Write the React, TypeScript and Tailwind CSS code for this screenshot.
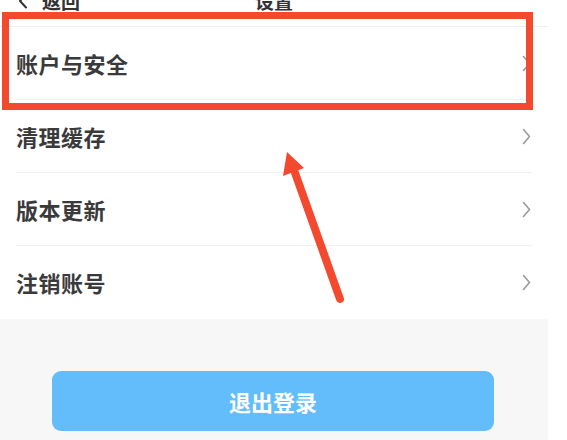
import React from "react";

const rows = ["账户与安全", "清理缓存", "版本更新", "注销账号"];

const cjk = { fontFamily: '"Noto Sans CJK SC", "Noto Sans", sans-serif' };

function Chevron({ className = "" }: { className?: string }) {
  return (
    <svg width="9" height="17" viewBox="0 0 9 17" fill="none" className={className}>
      <path d="M1.5 1.5 L7.5 8.5 L1.5 15.5" stroke="#9a9a9a" strokeWidth="1.6" strokeLinecap="round" strokeLinejoin="round" />
    </svg>
  );
}

export default function App() {
  return (
    <div className="relative w-[567px] h-[440px] overflow-hidden bg-white" style={cjk}>
      <div className="w-[548px] h-full flex flex-col">
        {/* Header */}
        <div className="-mt-[24px] h-[51px] shrink-0 grid grid-cols-[1fr_auto_1fr] items-center border-b border-[#eeeeee]">
          <div className="flex items-center gap-[14px] pl-[18px]">
            <svg width="10" height="16" viewBox="0 0 10 16" fill="none">
              <path d="M8 1.5 L2 8 L8 14.5" stroke="#333" strokeWidth="2" strokeLinecap="round" strokeLinejoin="round" />
            </svg>
            <span className="text-[19px] font-bold text-[#333]">返回</span>
          </div>
          <span className="text-[19px] font-bold text-[#333]">设置</span>
          <div />
        </div>

        {/* Rows */}
        <div className="flex flex-col">
          {rows.map((label, i) => (
            <div
              key={label}
              className={
                "mx-4 h-[73px] flex items-center justify-between " +
                (i < rows.length - 1 ? "border-b border-[#f0f0f0]" : "")
              }
            >
              <span className="text-[22px] font-bold text-[#3a3a3a] tracking-[0.5px]">{label}</span>
              <Chevron className="mr-[1px]" />
            </div>
          ))}
        </div>

        {/* Bottom area */}
        <div className="flex-1 bg-[#f7f7f7] pt-[52px] pl-[52px]">
          <button className="w-[442px] h-[60px] rounded-[9px] bg-[#62bdfa] text-white text-[22px] font-bold flex items-center justify-center">
            退出登录
          </button>
        </div>
      </div>

      {/* Annotation: red box */}
      <div className="absolute left-[2px] top-[12px] w-[531px] h-[98px] border-[7px] border-[#f34a2f]" />

      {/* Annotation: arrow */}
      <svg className="absolute inset-0 pointer-events-none" width="567" height="440" viewBox="0 0 567 440">
        <line x1="340" y1="299" x2="294" y2="170" stroke="#f34a2f" strokeWidth="8" strokeLinecap="round" />
        <polygon points="287,152 304,168 283,176" fill="#f34a2f" />
      </svg>
    </div>
  );
}
